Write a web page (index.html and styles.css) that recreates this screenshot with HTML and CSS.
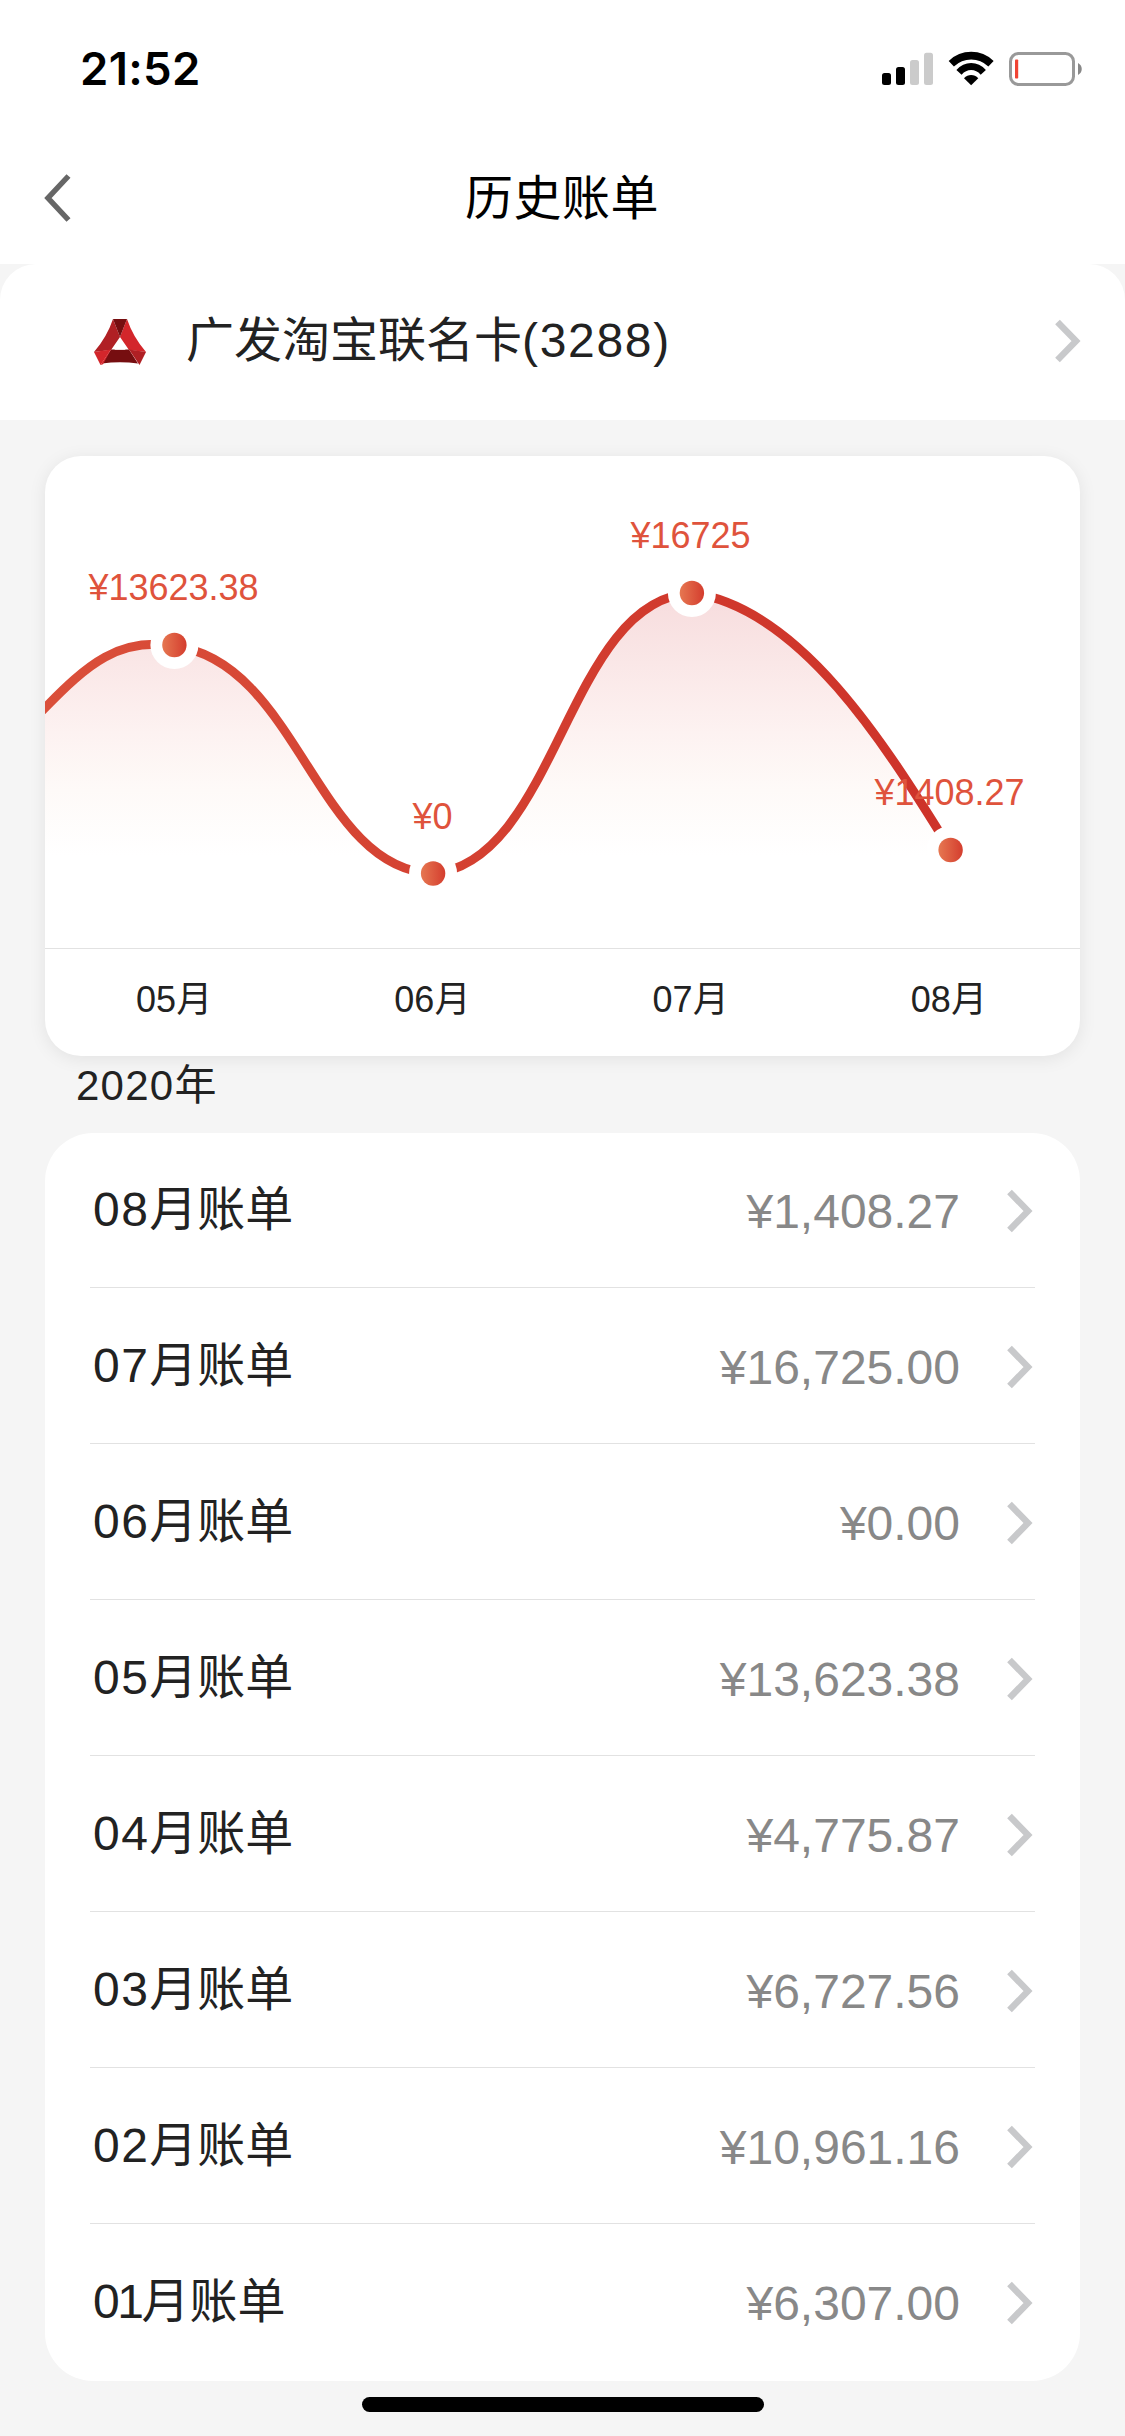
FILE: index.html
```html
<!DOCTYPE html>
<html lang="zh-CN">
<head>
<meta charset="utf-8">
<title>历史账单</title>
<link rel="stylesheet" href="styles.css">
</head>
<body>
<header class="top">
  <div class="status">
    <span class="clock">21:52</span>
    <svg class="status-icons" width="202" height="38" viewBox="0 0 202 38">
      <rect x="1" y="23" width="9" height="12" rx="2.5"/>
      <rect x="15" y="17" width="9" height="18" rx="2.5"/>
      <g fill="#cbcbcb"><rect x="29" y="10" width="9" height="25" rx="2.5"/><rect x="43" y="2.700" width="9" height="32.300" rx="2.5"/></g>
      <g fill="none" stroke="#000">
        <path d="M70.300 13.700C81.800 3 98.600 3 110 13.700" stroke-width="7.700"/>
        <path d="M78 22.300C85 14.600 95.300 14.600 102.300 22.300" stroke-width="7"/>
      </g>
      <path d="M83 28.200C87 24 93.300 24 97.300 28.200L90.150 35.300Z"/>
      <rect x="129.500" y="3.500" width="63" height="31" rx="8" fill="none" stroke="#999" stroke-width="3"/>
      <rect x="134" y="9.500" width="3.200" height="19" rx=".8" fill="#f04434"/>
      <path d="M197 13C202 15.500 202 22.500 197 25Z" fill="#888"/>
    </svg>
  </div>
  <div class="nav">
    <svg class="back" width="28" height="50" viewBox="0 0 28 50"><path d="M25.500 3L5 25L25.500 47" fill="none" stroke="#666" stroke-width="5.500"/></svg>
    <h1 class="title">历史账单</h1>
  </div>
</header>

<section class="account">
  <svg class="logo" width="52" height="46" viewBox="0 0 52 46">
    <path fill="#b02024" d="M19 0L26 18L17 31L0 33Q13 18 19 0Z"/>
    <path fill="#d3262b" d="M33 0L26 18L35 31L52 33Q39 18 33 0Z"/>
    <path fill="#760e10" d="M19 0H33L26 18ZM17 30.500H35L44 44.500Q26 42 8 44.500Z"/>
    <path fill="#d3262b" d="M0 33L17 30.500L6.500 46Z"/>
    <path fill="#b02024" d="M52 33L35 30.500L45.500 46Z"/>
    <path fill="#d3262b" d="M6.500 46L17 30.500L9 45.300Z"/>
    <path fill="#fff" d="M26 19L31.500 30.800H20.500Z"/>
  </svg>
  <span class="account-name">广发淘宝联名卡<span class="num">(3288)</span></span>
  <svg class="arrow" width="28" height="48" viewBox="0 0 28 48"><path d="M3.500 5L22 24L3.500 43" fill="none" stroke="#c8c9cb" stroke-width="6.500"/></svg>
</section>

<section class="chart-card">
  <svg class="chart" width="1035" height="492" viewBox="0 0 1035 492">
    <defs>
      <linearGradient id="line" x1="0" y1="0" x2="1035" y2="0" gradientUnits="userSpaceOnUse"><stop offset="0" stop-color="#da4f3a"/><stop offset=".65" stop-color="#d0382c"/><stop offset="1" stop-color="#cc3028"/></linearGradient>
      <linearGradient id="area" x1="0" y1="137" x2="0" y2="400" gradientUnits="userSpaceOnUse"><stop offset="0" stop-color="#f7dcdd"/><stop offset=".53" stop-color="#fdf2f1"/><stop offset=".75" stop-color="#fefaf8"/><stop offset="1" stop-color="#fff"/></linearGradient>
      <linearGradient id="dot"><stop offset="0" stop-color="#e67751"/><stop offset="1" stop-color="#d43d2e"/></linearGradient>
    </defs>
    <path fill="url(#area)" d="M0 252C43 207 75 181 129.400 190C253 206 272 414 388 417.500C512.700 406 522 143 647 137C755 152 840 288 905.600 394V417H0Z"/>
    <path fill="none" stroke="url(#line)" stroke-width="9" d="M-3 255C43 207 75 181 129.400 190C253 206 272 414 388 417.500C512.700 406 522 143 647 137C755 152 840 288 905.600 394"/>
    <g fill="#fff"><circle cx="129.400" cy="189" r="24"/><circle cx="388.100" cy="417.500" r="24"/><circle cx="646.900" cy="137" r="24"/><circle cx="905.600" cy="394" r="24"/></g>
    <g fill="url(#dot)"><circle cx="129.400" cy="189" r="12.200"/><circle cx="388.100" cy="417.500" r="12.200"/><circle cx="646.900" cy="137" r="12.200"/><circle cx="905.600" cy="394" r="12.200"/></g>
    <g class="values"><text x="128.500" y="144">¥13623.38</text><text x="387.500" y="373">¥0</text><text x="645.500" y="92">¥16725</text><text x="904.500" y="349">¥1408.27</text></g>
  </svg>
  <div class="months"><span>05月</span><span>06月</span><span>07月</span><span>08月</span></div>
</section>

<h2 class="year"><span class="num">2020</span>年</h2>

<ul class="bills" id="bills"></ul>
<div class="home-bar"></div>
<script src="bills.js"></script>
</body>
</html>
```
FILE: styles.css
```css
* { box-sizing: border-box; }
body {
  margin: 0;
  width: 1125px;
  height: 2436px;
  overflow: hidden;
  background: #f5f5f5;
  color: #222;
  font-family: "Liberation Sans", "Noto Sans CJK SC", sans-serif;
  font-size: 48px;
  line-height: 1;
}
.num { letter-spacing: .03em; }
.top { height: 264px; background: #fff; }
.status {
  display: flex;
  justify-content: space-between;
  height: 136px;
  padding: 50px 42px 0 80px;
}
.clock { font: 600 45.5px/38px Inter, sans-serif; letter-spacing: .3px; color: #000; }
.nav { display: flex; align-items: center; height: 124px; padding-left: 43px; }
.title {
  flex: 1;
  margin: 0 72px 0 0;
  padding-top: 2px;
  text-align: center;
  font-size: 48px;
  font-weight: 400;
  letter-spacing: .5px;
  color: #000;
}
.account {
  display: flex;
  align-items: center;
  height: 156px;
  padding: 0 43px 0 94px;
  border-radius: 36px 36px 0 0;
  background: #fff;
}
.account-name { flex: 1; margin-left: 40px; padding-bottom: 2px; }
.account .num { letter-spacing: .035em; }
.account .arrow { margin-bottom: 3px; }
.chart-card {
  height: 600px;
  margin: 36px 45px 0;
  border-radius: 36px;
  background: #fff;
  box-shadow: 0 3px 18px rgba(0, 0, 0, .08);
}
.chart { display: block; }
.values { font-size: 36px; text-anchor: middle; fill: #df533c; }
.months {
  display: grid;
  grid-template-columns: repeat(4, 1fr);
  align-items: center;
  height: 108px;
  padding: 0 2px 6px 0;
  border-top: 1px solid #e2e2e2;
  text-align: center;
  font-size: 36px;
}
.year { height: 77px; margin: 0; padding: 9px 0 0 76px; font-size: 42px; font-weight: 400; }
.bills {
  height: 1248px;
  margin: 0 45px;
  padding: 0;
  border-radius: 48px;
  background: #fff;
  list-style: none;
}
.bill {
  display: flex;
  align-items: center;
  height: 156px;
  margin: 0 45px;
  padding: 2px 0 0 3px;
  border-bottom: 1px solid #e2e2e2;
}
.bill:first-child { height: 155px; }
.bill:last-child { border-bottom: 0; }
.label { flex: 1; padding-bottom: 2px; }
.bill:last-child .num { letter-spacing: -.05em; }
.amount { margin-right: 46px; padding-top: 2px; color: #888; }
.bill .arrow { margin-right: 1px; }
.home-bar { width: 402px; height: 15px; margin: 16px auto 0; border-radius: 8px; background: #000; }
```
FILE: bills.js
```js
const bills = [
  ['08', '1,408.27'], ['07', '16,725.00'], ['06', '0.00'], ['05', '13,623.38'],
  ['04', '4,775.87'], ['03', '6,727.56'], ['02', '10,961.16'], ['01', '6,307.00'],
];
document.getElementById('bills').innerHTML = bills.map(([month, amount]) => `
  <li class="bill">
    <span class="label"><span class="num">${month}</span>月账单</span>
    <span class="amount">¥${amount}</span>
    <svg class="arrow" width="28" height="48" viewBox="0 0 28 48"><path d="M3.500 5L22 24L3.500 43" fill="none" stroke="#c8c9cb" stroke-width="6.500"/></svg>
  </li>`).join('');
```
